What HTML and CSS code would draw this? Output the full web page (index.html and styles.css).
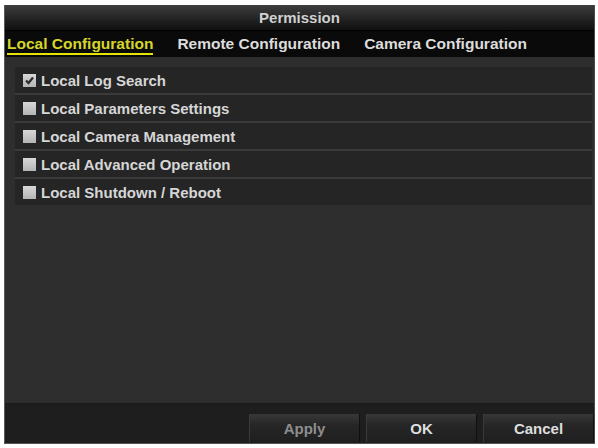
FILE: index.html
```html
<!DOCTYPE html>
<html lang="en">
<head>
  <meta charset="UTF-8">
  <title>Permission</title>
  <link rel="stylesheet" href="styles.css">
</head>
<body>
  <div class="dialog">
    <div class="title">Permission</div>

    <div class="tabs">
      <span class="tab active">Local Configuration</span>
      <span class="tab">Remote Configuration</span>
      <span class="tab">Camera Configuration</span>
    </div>

    <div class="content">
      <ul class="perm-list">
        <li class="perm">
          <span class="check checked">
            <svg viewBox="0 0 13 13" width="13" height="13"><path d="M3 6.5 L5.5 9 L10 3.5" fill="none" stroke="#2b2b2b" stroke-width="2.2"/></svg>
          </span>
          Local Log Search
        </li>
        <li class="perm"><span class="check"></span>Local Parameters Settings</li>
        <li class="perm"><span class="check"></span>Local Camera Management</li>
        <li class="perm"><span class="check"></span>Local Advanced Operation</li>
        <li class="perm"><span class="check"></span>Local Shutdown / Reboot</li>
      </ul>
    </div>

    <div class="footer">
      <button class="btn" disabled>Apply</button>
      <button class="btn">OK</button>
      <button class="btn">Cancel</button>
    </div>
  </div>
</body>
</html>
```

FILE: styles.css
```css
body { margin: 0; background: #fff; font-family: "Liberation Sans", Arial, sans-serif; font-weight: bold; font-size: 15px; }

.dialog { width: 591px; height: 439px; margin: 5px 0 0 4px; display: flex; flex-direction: column; box-sizing: border-box; border-left: 1px solid #5a5a5a; border-right: 1px solid #4a4a4a; border-bottom: 1px solid #555; background: #2e2e2e; }

.title { height: 26px; line-height: 26px; text-align: center; color: #d0d0d0; background: linear-gradient(#3d3d3d, #1c1c1c 70%, #111); border-bottom: 1px solid #000; box-sizing: border-box; }

.tabs { height: 26px; display: flex; align-items: center; gap: 24px; padding: 1px 0 0 2px; background: #0a0a0a; box-sizing: border-box; }
.tab { color: #dcdcdc; font-size: 15.5px; line-height: 18px; border-bottom: 2px solid transparent; }
.tab.active { color: #d6d62a; border-bottom-color: #e4e400; }

.content { flex: 1; padding: 10px 2px 0 10px; }
.perm-list { list-style: none; margin: 0; padding: 0; }
.perm { height: 26px; display: flex; align-items: center; gap: 5px; padding-left: 8px; background: #252525; border-bottom: 2px solid #3a3a3a; color: #d6d6d6; }
.perm:last-child { border-bottom: none; }
.check { width: 13px; height: 13px; background: linear-gradient(#d8d8d8, #b4b4b4); display: flex; }

.footer { height: 38px; display: flex; justify-content: flex-end; align-items: flex-end; gap: 6px; padding: 0 0 1px 0; background: #1e1e1e; border-top: 1px solid #1a1a1a; }
.btn { width: 111px; height: 28px; border: none; border-left: 1px solid #3a3a3a; border-right: 1px solid #101010; background: linear-gradient(#383838, #262626 40%, #1f1f1f); color: #dedede; font: inherit; padding: 0; }
.btn:disabled { color: #8e8e8e; }
```
